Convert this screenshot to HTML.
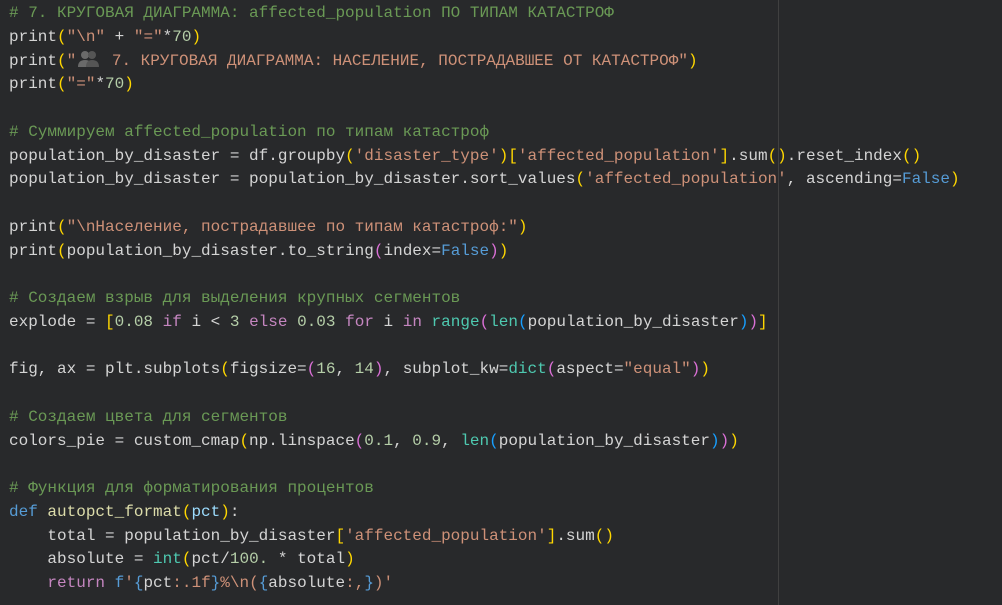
<!DOCTYPE html>
<html><head><meta charset="utf-8"><style>
html,body{margin:0;padding:0;background:#28292b;width:1002px;height:605px;overflow:hidden}
pre{margin:0;padding:2px 0 0 9px;font-family:"Liberation Mono","DejaVu Sans Mono",monospace;font-size:16px;line-height:23.75px;color:#d4d4d4;white-space:pre}
.c{color:#6a9955}.s{color:#ce9178}.n{color:#b5cea8}.k{color:#569cd6}.r{color:#c586c0}.b{color:#4ec9b0}.p{color:#9cdcfe}.f{color:#dcdcaa}
.y{color:#ffd700}.m{color:#da70d6}.u{color:#179fff}
.ruler{position:absolute;left:778px;top:0;width:1px;height:605px;background:#404040}
.emo{display:inline-block;width:26px;height:18px;vertical-align:-3px}
</style></head><body>
<div class="ruler"></div>
<pre><span class="c"># 7. КРУГОВАЯ ДИАГРАММА: affected_population ПО ТИПАМ КАТАСТРОФ</span>
print<span class="y">(</span><span class="s">"</span><span class="s">\n"</span> + <span class="s">"="</span>*<span class="n">70</span><span class="y">)</span>
print<span class="y">(</span><span class="s">"<svg class="emo" viewBox="0 0 26 18"><circle cx="9" cy="5" r="4" fill="#6a6a6a"/><circle cx="16" cy="5" r="4" fill="#555"/><path d="M2 17 Q2 10 9 10 Q16 10 16 17Z" fill="#6a6a6a"/><path d="M10 17 Q10 10 16 10 Q23 10 23 17Z" fill="#555"/></svg> 7. КРУГОВАЯ ДИАГРАММА: НАСЕЛЕНИЕ, ПОСТРАДАВШЕЕ ОТ КАТАСТРОФ"</span><span class="y">)</span>
print<span class="y">(</span><span class="s">"="</span>*<span class="n">70</span><span class="y">)</span>

<span class="c"># Суммируем affected_population по типам катастроф</span>
population_by_disaster = df.groupby<span class="y">(</span><span class="s">'disaster_type'</span><span class="y">)[</span><span class="s">'affected_population'</span><span class="y">]</span>.sum<span class="y">()</span>.reset_index<span class="y">()</span>
population_by_disaster = population_by_disaster.sort_values<span class="y">(</span><span class="s">'affected_population'</span>, ascending=<span class="k">False</span><span class="y">)</span>

print<span class="y">(</span><span class="s">"\nНаселение, пострадавшее по типам катастроф:"</span><span class="y">)</span>
print<span class="y">(</span>population_by_disaster.to_string<span class="m">(</span>index=<span class="k">False</span><span class="m">)</span><span class="y">)</span>

<span class="c"># Создаем взрыв для выделения крупных сегментов</span>
explode = <span class="y">[</span><span class="n">0.08</span> <span class="r">if</span> i &lt; <span class="n">3</span> <span class="r">else</span> <span class="n">0.03</span> <span class="r">for</span> i <span class="r">in</span> <span class="b">range</span><span class="m">(</span><span class="b">len</span><span class="u">(</span>population_by_disaster<span class="u">)</span><span class="m">)</span><span class="y">]</span>

fig, ax = plt.subplots<span class="y">(</span>figsize=<span class="m">(</span><span class="n">16</span>, <span class="n">14</span><span class="m">)</span>, subplot_kw=<span class="b">dict</span><span class="m">(</span>aspect=<span class="s">"equal"</span><span class="m">)</span><span class="y">)</span>

<span class="c"># Создаем цвета для сегментов</span>
colors_pie = custom_cmap<span class="y">(</span>np.linspace<span class="m">(</span><span class="n">0.1</span>, <span class="n">0.9</span>, <span class="b">len</span><span class="u">(</span>population_by_disaster<span class="u">)</span><span class="m">)</span><span class="y">)</span>

<span class="c"># Функция для форматирования процентов</span>
<span class="k">def</span> <span class="f">autopct_format</span><span class="y">(</span><span class="p">pct</span><span class="y">)</span>:
    total = population_by_disaster<span class="y">[</span><span class="s">'affected_population'</span><span class="y">]</span>.sum<span class="y">()</span>
    absolute = <span class="b">int</span><span class="y">(</span>pct/<span class="n">100.</span> * total<span class="y">)</span>
    <span class="r">return</span> <span class="k">f</span><span class="s">'</span><span class="k">{</span>pct<span class="s">:.1f</span><span class="k">}</span><span class="s">%\n(</span><span class="k">{</span>absolute<span class="s">:,</span><span class="k">}</span><span class="s">)'</span>
</pre>
</body></html>
